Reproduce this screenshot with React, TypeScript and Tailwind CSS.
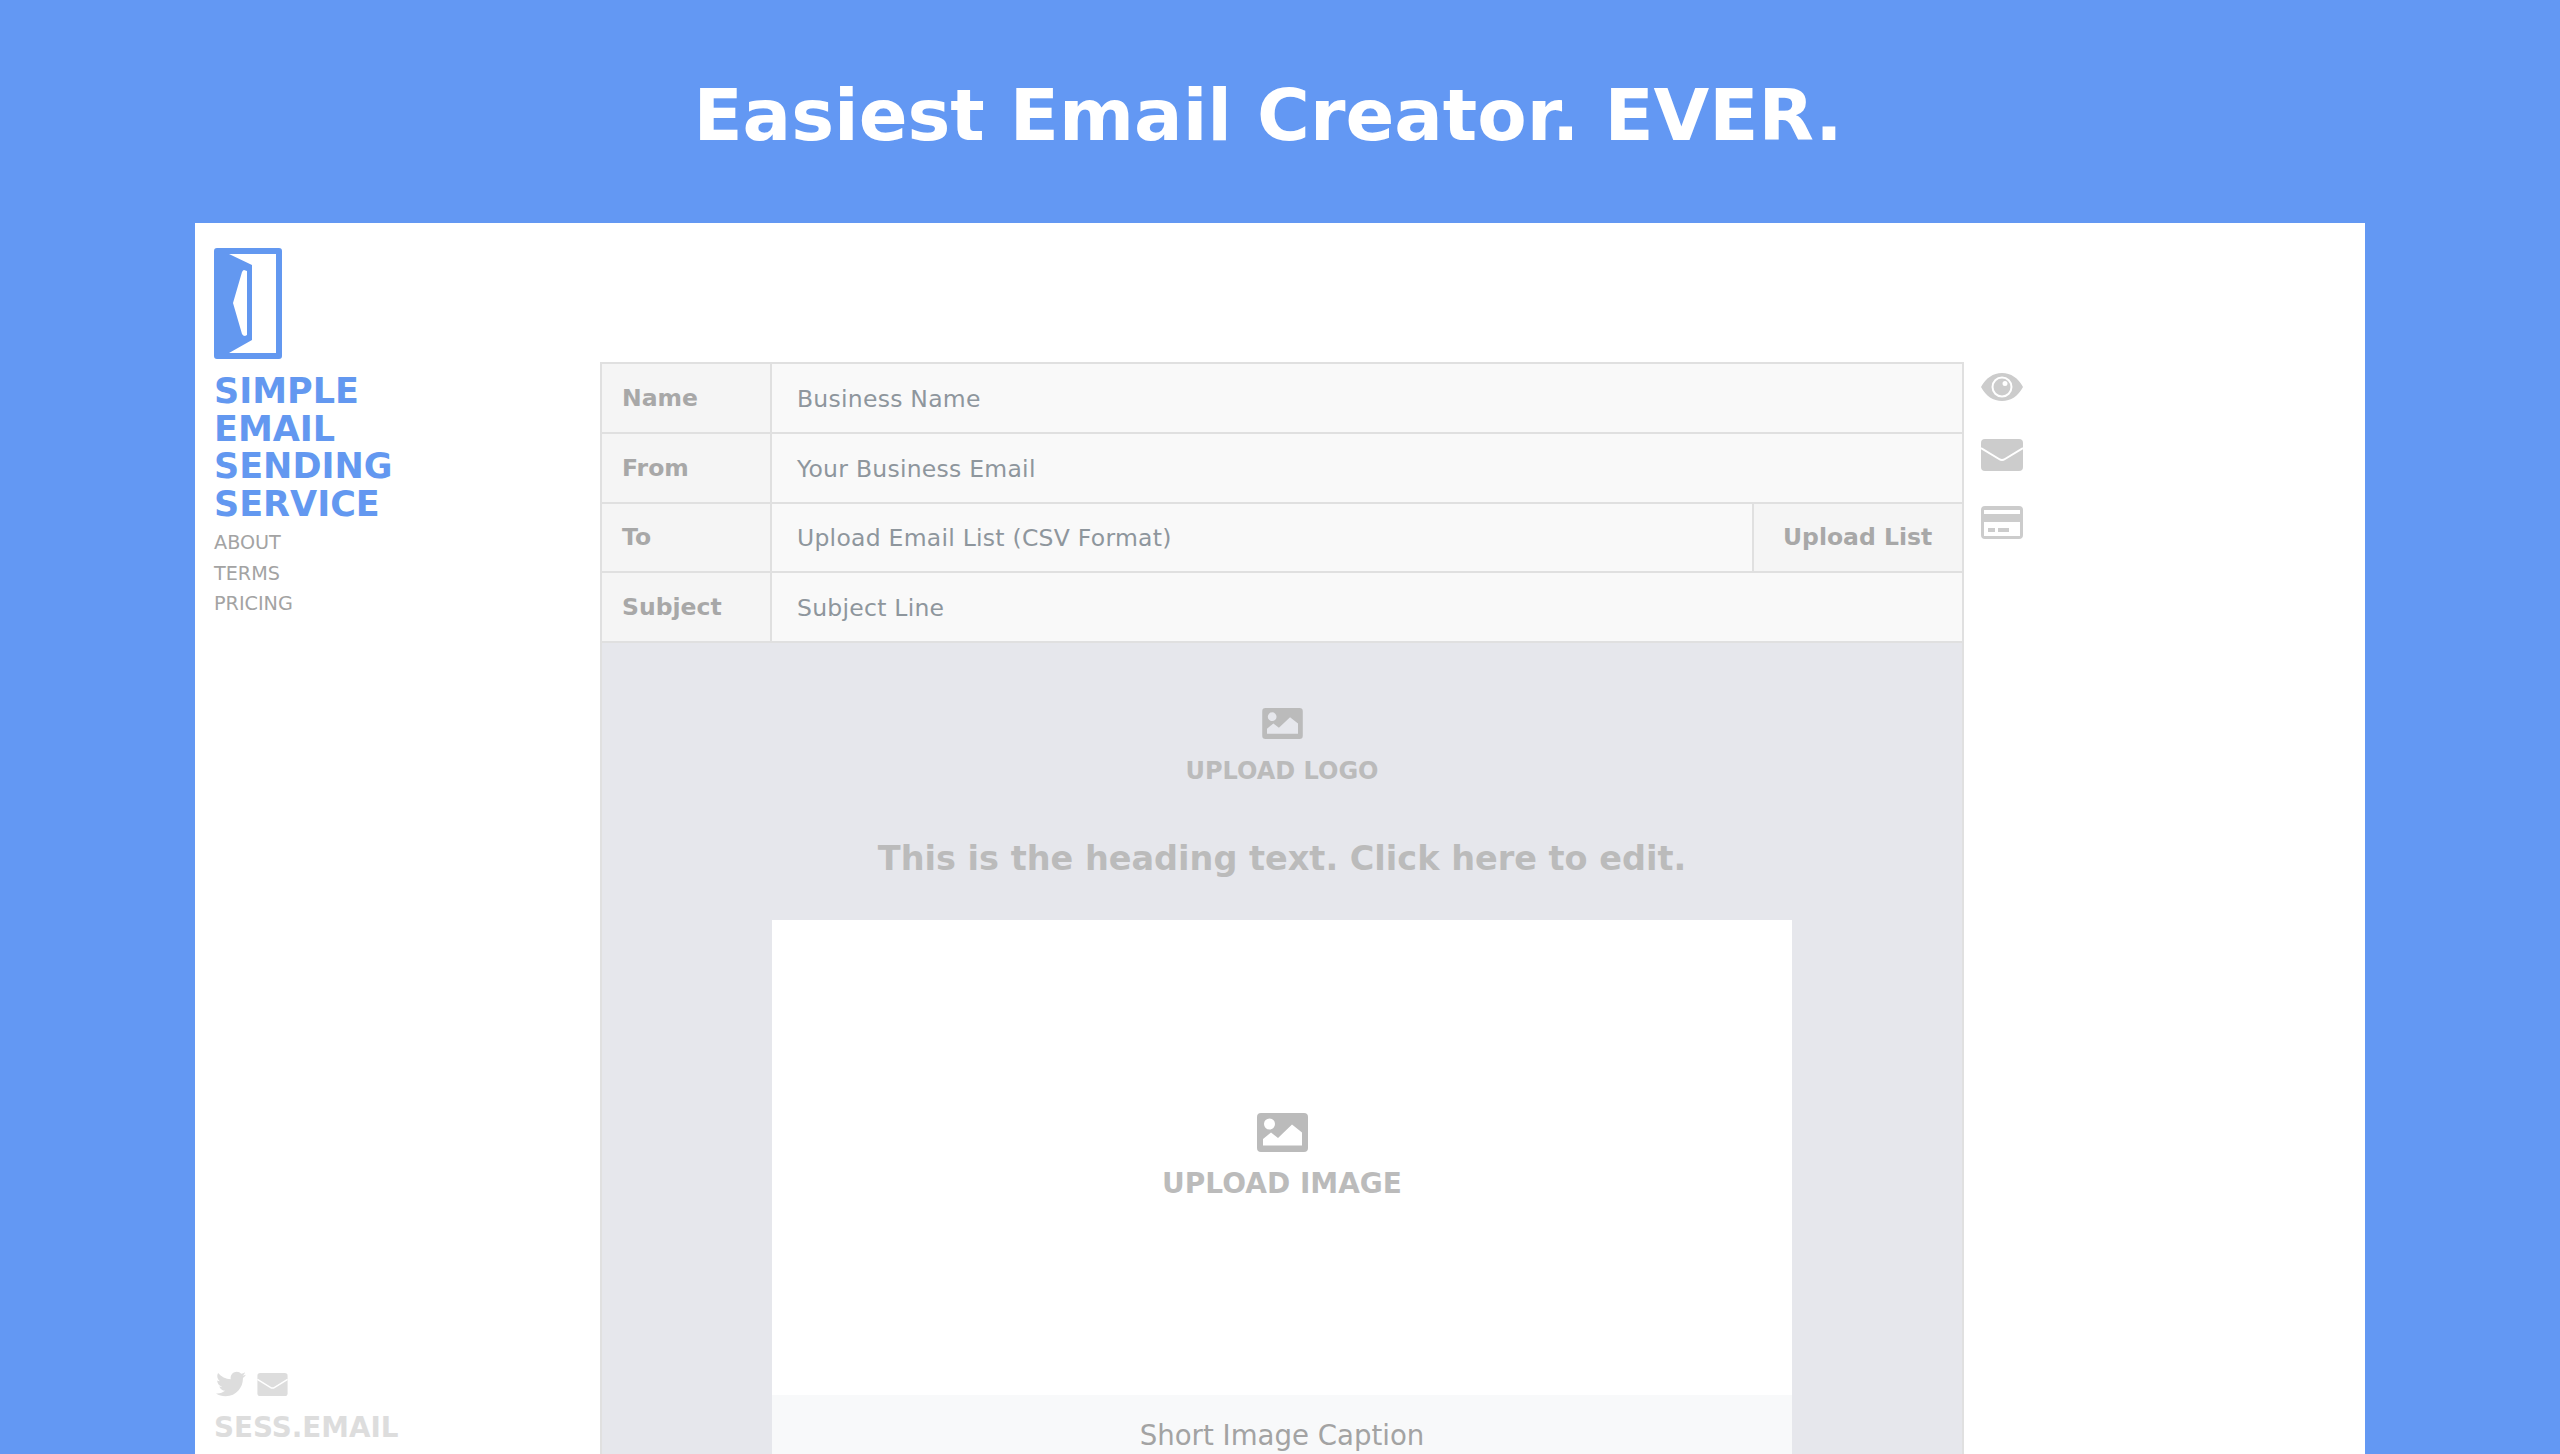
import { FaTwitter } from 'react-icons/fa';

const font = "font-['DejaVu_Sans',Verdana,sans-serif]";

function MailIcon({ className }: { className: string }) {
  return (
    <svg viewBox="0 0 42 32" className={className}>
      <rect width="42" height="32" rx="4" fill="currentColor" />
      <path d="M0 9 L18 20 Q21 22 24 20 L42 9" fill="none" stroke="#fff" strokeWidth="2" />
    </svg>
  );
}

function ImageIcon({ className }: { className: string }) {
  return (
    <svg viewBox="0 0 51 39" className={className}>
      <path
        fillRule="evenodd"
        fill="currentColor"
        d="M4 0H47A4 4 0 0 1 51 4V35A4 4 0 0 1 47 39H4A4 4 0 0 1 0 35V4A4 4 0 0 1 4 0ZM6 32.500H45V19.500L35 11.500L21 25L14 19.500L6 26ZM12.500 5.500A5.500 5.500 0 1 0 12.500 16.500A5.500 5.500 0 1 0 12.500 5.500Z"
      />
    </svg>
  );
}

function Row({ label, value, action }: { label: string; value: string; action?: string }) {
  return (
    <div className="flex h-[69.750px] border-b-2 border-[#e0e0e0]">
      <div className="flex w-[170px] items-center border-r-2 border-[#e0e0e0] bg-[#f5f5f5] pt-[1px] pl-[20px] text-[23.500px] font-bold text-[#a8a8a8]">
        {label}
      </div>
      <div className="flex flex-1 items-center bg-[#f9f9f9] pt-[3px] pl-[25px] text-[23.500px] tracking-[0.25px] text-[#8e969d]">
        {value}
      </div>
      {action && (
        <div className="flex w-[210px] items-center border-l-2 border-[#e0e0e0] bg-[#f5f5f5] pt-[1px] pl-[29px] text-[23.500px] font-bold text-[#a8a8a8]">
          {action}
        </div>
      )}
    </div>
  );
}

export default function App() {
  return (
    <div className={`flex h-[1454px] w-[2560px] flex-col overflow-hidden bg-[#6398f3] ${font}`}>
      <div className="flex h-[223px] shrink-0 items-center justify-center pt-[6px] pr-[24px]">
        <h1 className="text-[72px] font-bold leading-none text-white">Easiest Email Creator. EVER.</h1>
      </div>

      <div className="mx-[195px] flex min-h-0 flex-1 bg-white">
        <aside className="flex w-[405px] shrink-0 flex-col justify-between pt-[25px] pb-[9px] pl-[19px]">
          <div>
            <svg viewBox="0 0 68 111" className="h-[111px] w-[68px]">
              <path
                fill="#6398f0"
                fillRule="evenodd"
                d="M3 0H65A3 3 0 0 1 68 3V108A3 3 0 0 1 65 111H3A3 3 0 0 1 0 108V3A3 3 0 0 1 3 0ZM15 6L38 17V92L15 105H62V6ZM30 22Q29 22 28 24L19 55L28 86Q29 88 31 88L33 87V23Z"
              />
            </svg>
            <div className="mt-[14px] text-[35px] font-bold leading-[37.500px] text-[#6398f0]">
              <div>SIMPLE</div>
              <div>EMAIL</div>
              <div>SENDING</div>
              <div>SERVICE</div>
            </div>
            <nav className="mt-[5px] text-[19.200px] leading-[30.500px] text-[#a3a3a3]">
              <div>ABOUT</div>
              <div>TERMS</div>
              <div>PRICING</div>
            </nav>
          </div>
          <div>
            <div className="flex items-center gap-[11px] pl-[2px] text-[#dddddd]">
              <FaTwitter className="h-[30px] w-[30px]" />
              <MailIcon className="h-[23px] w-[31px]" />
            </div>
            <div className="mt-[12px] text-[27.800px] font-bold leading-[34px] text-[#dddddd]">SESS.EMAIL</div>
          </div>
        </aside>

        <main className="mt-[139px] flex w-[1364px] shrink-0 flex-col border-x-2 border-t-2 border-[#e0e0e0]">
          <Row label="Name" value="Business Name" />
          <Row label="From" value="Your Business Email" />
          <Row label="To" value="Upload Email List (CSV Format)" action="Upload List" />
          <Row label="Subject" value="Subject Line" />

          <div className="flex flex-1 flex-col items-center bg-[#e6e7ec] pt-[65px] font-bold text-[#bbbbbb]">
            <ImageIcon className="h-[31px] w-[41px]" />
            <div className="mt-[20px] text-[24px] leading-[24px]">UPLOAD LOGO</div>
            <div className="mt-[51px] text-[33.500px] leading-[50px]">This is the heading text. Click here to edit.</div>
            <div className="mt-[36px] flex w-[1020px] flex-1 flex-col bg-white">
              <div className="flex h-[475px] shrink-0 flex-col items-center pt-[193px]">
                <ImageIcon className="h-[39px] w-[51px]" />
                <div className="mt-[17px] text-[28px] leading-[30px]">UPLOAD IMAGE</div>
              </div>
              <div className="flex flex-1 justify-center bg-[#f8f9fa] pt-[23px] text-[27.600px] font-normal leading-[36px] text-[#a3a3a3]">
                Short Image Caption
              </div>
            </div>
          </div>
        </main>

        <div className="mt-[139px] flex flex-col items-start pl-[17px] pt-[11px] text-[#cccccc]">
          <svg viewBox="0 0 42 28" className="h-[28px] w-[42px]">
            <path
              fill="currentColor"
              fillRule="evenodd"
              d="M0 14C5 5 12 0 21 0S37 5 42 14C37 23 30 28 21 28S5 23 0 14ZM21 3.500A10.500 10.500 0 1 0 21 24.500A10.500 10.500 0 1 0 21 3.500ZM21 5.500A8.500 8.500 0 1 1 21 22.500A8.500 8.500 0 1 1 21 5.500ZM24 8A2.500 2.500 0 1 0 24 13A2.500 2.500 0 1 0 24 8Z"
            />
          </svg>
          <MailIcon className="mt-[38px] h-[32px] w-[42px]" />
          <svg viewBox="0 0 42 33" className="mt-[35px] h-[33px] w-[42px]">
            <path
              fill="currentColor"
              fillRule="evenodd"
              d="M4 0H38A4 4 0 0 1 42 4V29A4 4 0 0 1 38 33H4A4 4 0 0 1 0 29V4A4 4 0 0 1 4 0ZM3 4V8H39V4ZM3 16V30H39V16ZM7 22H14V26H7ZM17 22H28V26H17Z"
            />
          </svg>
        </div>
      </div>
    </div>
  );
}
